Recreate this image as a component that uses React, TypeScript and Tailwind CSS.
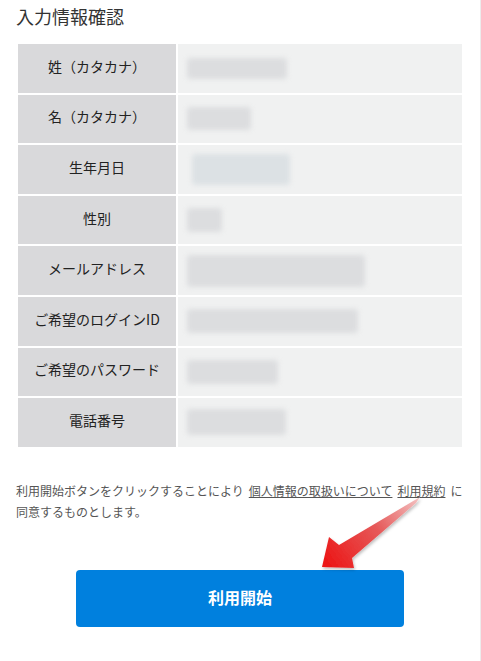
const rows: { label: string; blur: { w: number; h: number; x: number; tint?: string } }[] = [
  { label: "姓（カタカナ）", blur: { w: 100, h: 21, x: 9 } },
  { label: "名（カタカナ）", blur: { w: 64, h: 23, x: 9 } },
  { label: "生年月日", blur: { w: 98, h: 31, x: 14, tint: "#dce1e4" } },
  { label: "性別", blur: { w: 35, h: 24, x: 9 } },
  { label: "メールアドレス", blur: { w: 178, h: 32, x: 9 } },
  { label: "ご希望のログインID", blur: { w: 171, h: 24, x: 9 } },
  { label: "ご希望のパスワード", blur: { w: 91, h: 24, x: 9 } },
  { label: "電話番号", blur: { w: 99, h: 26, x: 9 } },
];

function InfoRow({ label, blur }: (typeof rows)[number]) {
  return (
    <div className="grid h-[48.6px] grid-cols-[158px_1fr] gap-[2px]">
      <div className="flex items-center justify-center bg-[#d9d9db] pb-[4px] text-[14px] text-[#222]">{label}</div>
      <div className="flex items-center bg-[#f0f1f1]">
        <div
          className="rounded-[4px] blur-[2.5px]"
          style={{ width: blur.w, height: blur.h, marginLeft: blur.x, background: blur.tint ?? "#dcdddf" }}
        />
      </div>
    </div>
  );
}

function Arrow() {
  return (
    <svg className="pointer-events-none absolute left-0 top-0" width="481" height="661" viewBox="0 0 481 661">
      <defs>
        <linearGradient id="arrowFill" x1="420" y1="497" x2="325" y2="565" gradientUnits="userSpaceOnUse">
          <stop offset="0" stopColor="#f4c4c4" />
          <stop offset="0.45" stopColor="#e65a5a" />
          <stop offset="1" stopColor="#ec1414" />
        </linearGradient>
        <filter id="arrowShadow" x="-20%" y="-20%" width="140%" height="140%">
          <feDropShadow dx="1" dy="2" stdDeviation="1.5" floodColor="#000" floodOpacity="0.25" />
        </filter>
      </defs>
      <polygon
        points="420,497 416,503 352,558 354,568 322,567 329,537 339,545"
        fill="url(#arrowFill)"
        filter="url(#arrowShadow)"
      />
    </svg>
  );
}

export default function App() {
  return (
    <div
      className="relative h-[661px] w-[481px] border-r border-[#ececec] bg-white px-4 pt-[2px]"
      style={{ fontFamily: '"Noto Sans CJK JP", "Noto Sans", sans-serif' }}
    >
      <h2 className="text-[18px] leading-[28px] text-[#333]">入力情報確認</h2>

      <div className="mt-[14px] flex flex-col gap-[2px] px-[2px]">
        {rows.map((row) => (
          <InfoRow key={row.label} {...row} />
        ))}
      </div>

      <p className="mt-[33px] text-[12px] leading-[21px] text-[#555]">
        利用開始ボタンをクリックすることにより
        <a className="ml-[5px] underline">個人情報の取扱いについて</a>
        <a className="ml-[5px] underline">利用規約</a>
        <span className="ml-[5px]">に</span>
        同意するものとします。
      </p>

      <div className="mt-[48px] flex justify-center">
        <button className="h-[57px] w-[328px] rounded-[4px] bg-[#0080de] pb-[2px] text-[16px] font-bold text-white">
          利用開始
        </button>
      </div>

      <Arrow />
    </div>
  );
}
